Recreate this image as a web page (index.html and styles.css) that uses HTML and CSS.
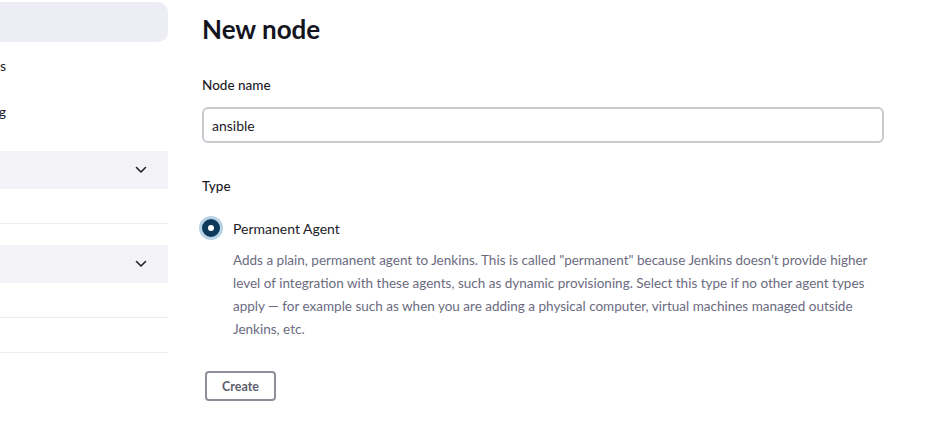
FILE: index.html
```html
<!DOCTYPE html>
<html>
<head>
<meta charset="utf-8">
<link rel="stylesheet" href="styles.css">
</head>
<body>
<div class="page">
  <aside class="sidebar">
    <div class="task task-active"></div>
    <div class="task"><span class="clip"><span>Clouds</span></span></div>
    <div class="task"><span class="clip"><span>Node Monitoring</span></span></div>
    <div class="pane">
      <div class="pane-header">
        <svg class="chev" width="12" height="8" viewBox="0 0 12 8"><path d="M1.5 1.5 L6 6 L10.5 1.5" fill="none" stroke="#20202a" stroke-width="1.6" stroke-linecap="round" stroke-linejoin="round"/></svg>
      </div>
      <div class="pane-row"></div>
    </div>
    <div class="pane">
      <div class="pane-header">
        <svg class="chev" width="12" height="8" viewBox="0 0 12 8"><path d="M1.5 1.5 L6 6 L10.5 1.5" fill="none" stroke="#20202a" stroke-width="1.6" stroke-linecap="round" stroke-linejoin="round"/></svg>
      </div>
      <div class="pane-row"></div>
      <div class="pane-row"></div>
    </div>
  </aside>
  <main class="main">
    <h1 class="title">New node</h1>
    <div class="field">
      <label class="label">Node name</label>
      <div class="input">ansible</div>
    </div>
    <div class="field field-type">
      <div class="label">Type</div>
      <div class="radio-row">
        <span class="radio"><span class="radio-dot"></span></span>
        <span class="radio-label">Permanent Agent</span>
      </div>
      <p class="desc">Adds a plain, permanent agent to Jenkins. This is called "permanent" because Jenkins doesn’t provide higher level of integration with these agents, such as dynamic provisioning. Select this type if no other agent types apply — for example such as when you are adding a physical computer, virtual machines managed outside Jenkins, etc.</p>
    </div>
    <button class="btn">Create</button>
  </main>
</div>
</body>
</html>
```
FILE: styles.css
```css
html, body {
  margin: 0;
  padding: 0;
  background: #ffffff;
}
body {
  font-family: "Lato", "Liberation Sans", sans-serif;
  color: #14141f;
  width: 926px;
  height: 428px;
  overflow: hidden;
}
.page {
  display: flex;
  align-items: flex-start;
}
.sidebar {
  width: 168px;
  flex: none;
  padding-top: 2px;
  display: flex;
  flex-direction: column;
}
.task {
  height: 46px;
  display: flex;
  align-items: center;
  font-size: 14px;
  color: #1c1c28;
}
.task-active {
  height: 40px;
  background: #ededf6;
  border-radius: 0 10px 10px 0;
}
.clip {
  width: 6px;
  overflow: hidden;
  display: flex;
  justify-content: flex-end;
  white-space: nowrap;
}
.pane {
  margin-top: 21px;
}
.task + .pane {
  margin-top: 17px;
}
.pane-header {
  height: 38px;
  background: #f2f2f7;
  display: flex;
  align-items: center;
  justify-content: flex-end;
  padding-right: 21px;
}
.chev {
  display: block;
}
.pane-row {
  height: 34px;
  border-bottom: 1px solid #ececef;
}
.main {
  margin-left: 34px;
  width: 682px;
  display: flex;
  flex-direction: column;
}
.title {
  margin: 13px 0 0 0;
  font-size: 26px;
  font-weight: 700;
  line-height: 32px;
  color: #14141f;
}
.field {
  margin-top: 31px;
}
.label {
  display: block;
  font-size: 13.5px;
  font-weight: 500;
  line-height: 18px;
  color: #1c1c28;
}
.input {
  margin-top: 13px;
  height: 32px;
  border: 2px solid #c6cbd0;
  border-radius: 6px;
  padding: 0 8px;
  display: flex;
  align-items: center;
  font-size: 14px;
  color: #1c1c28;
}
.field-type {
  margin-top: 34px;
}
.radio-row {
  margin-top: 21px;
  display: flex;
  align-items: center;
  margin-left: -3px;
}
.radio {
  width: 18px;
  height: 18px;
  border-radius: 50%;
  background: #0d3a5c;
  border: 3px solid #b9d3e6;
  display: flex;
  align-items: center;
  justify-content: center;
  flex: none;
}
.radio-dot {
  width: 6px;
  height: 6px;
  border-radius: 50%;
  background: #ffffff;
}
.radio-label {
  margin-left: 10px;
  font-size: 14px;
  color: #1c1c28;
}
.desc {
  margin: 9px 0 0 31px;
  font-size: 13.5px;
  line-height: 23px;
  color: #6b6b80;
}
.btn {
  align-self: flex-start;
  margin-top: 30px;
  margin-left: 3px;
  width: 71px;
  height: 30px;
  border: 2px solid #8e8e98;
  border-radius: 4px;
  background: #ffffff;
  font-family: inherit;
  font-size: 12.5px;
  font-weight: 700;
  color: #5e5e6c;
  padding: 0;
}
```
